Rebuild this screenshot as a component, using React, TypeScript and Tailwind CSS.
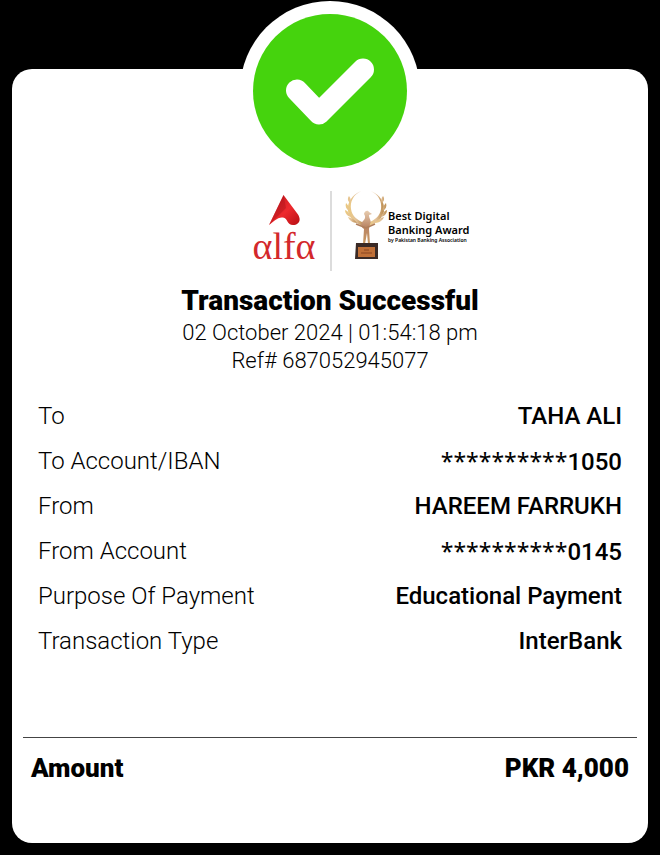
const details = [
  { label: "To", mask: "", value: "TAHA ALI" },
  { label: "To Account/IBAN", mask: "**********", value: "1050" },
  { label: "From", mask: "", value: "HAREEM FARRUKH" },
  { label: "From Account", mask: "**********", value: "0145" },
  { label: "Purpose Of Payment", mask: "", value: "Educational Payment" },
  { label: "Transaction Type", mask: "", value: "InterBank" },
];

function SuccessBadge() {
  return (
    <svg viewBox="0 0 180 180" className="size-[180px]" role="img" aria-label="Success">
      <circle cx="90" cy="90" r="90" fill="#fff" />
      <circle cx="90" cy="90" r="77" fill="#45d30d" />
      <path
        d="M57 89.500L79 112.500L123 68.500"
        fill="none"
        stroke="#fff"
        strokeWidth="22"
        strokeLinecap="round"
        strokeLinejoin="round"
      />
    </svg>
  );
}

function AlfaLogo() {
  return (
    <div className="flex w-16 flex-col items-center">
      <svg viewBox="0 0 32 32" className="size-8" aria-hidden="true">
        <defs>
          <linearGradient id="alfaRed" x1="0" y1="0" x2="1" y2="1">
            <stop offset="0" stopColor="#b9151b" />
            <stop offset="0.55" stopColor="#ee2a2e" />
            <stop offset="1" stopColor="#b80f14" />
          </linearGradient>
        </defs>
        <path
          d="M15.500 1L30 20.500C34 27 30 31 25 31C19 31 20 24.500 15 23.500C10 22.500 5 28 1 31Z"
          fill="url(#alfaRed)"
        />
        <path d="M15.500 1L18 14L1 31Z" fill="#a81218" opacity="0.4" />
      </svg>
      <span className="font-['Liberation_Serif',serif] text-[38px] leading-10 text-[#d3282c]">αlfα</span>
    </div>
  );
}

function Trophy() {
  return (
    <svg viewBox="0 0 44 70" className="h-[70px] w-11 shrink-0" aria-hidden="true">
      <defs>
        <linearGradient id="wing" x1="0" y1="0" x2="1" y2="0">
          <stop offset="0" stopColor="#ecca7c" />
          <stop offset="0.5" stopColor="#e3c29a" />
          <stop offset="1" stopColor="#b98a4c" />
        </linearGradient>
        <linearGradient id="stem" x1="0" y1="0" x2="0" y2="1">
          <stop offset="0" stopColor="#e8cdb0" />
          <stop offset="0.5" stopColor="#b98464" />
          <stop offset="1" stopColor="#c99a62" />
        </linearGradient>
      </defs>
      <g fill="url(#wing)">
        <path d="M17 0C9 4 6 11 7 18C8 25 13 29 20 32L19 35C11 32 5 27 4 20C3 11 8 4 17 0Z" />
        <path d="M27 0C35 4 38 11 37 18C36 25 31 29 24 32L25 35C33 32 39 27 40 20C41 11 36 4 27 0Z" />
        <path d="M6 12C4 10 3 8 5 5C7 7 7 10 6 12ZM5 20C2 18 1 15 2 12C4 14 6 17 5 20ZM7 26C3 25 1 22 1 19C4 20 6 23 7 26ZM13 32C9 32 5 29 4 26C8 27 11 29 13 32Z" />
        <path d="M38 12C40 10 41 8 39 5C37 7 37 10 38 12ZM39 20C42 18 43 15 42 12C40 14 38 17 39 20ZM37 26C41 25 43 22 43 19C40 20 38 23 37 26ZM31 32C35 32 39 29 40 26C36 27 33 29 31 32Z" />
      </g>
      <path
        d="M20 23C21 19 24 19 25 21L28 23L25 24C25 28 28 30 26 33L25 38L26 53H24L23 42L21 53H19L20 38C16 35 17 32 19 30C21 28 22 26 20 23Z"
        fill="url(#stem)"
      />
      <path d="M12 33L22 37L31 33" fill="none" stroke="#b07f5c" strokeWidth="1.500" />
      <path d="M12 52H34L34 68H11Z" fill="#3a2a26" />
      <path d="M14 56H31V66H14Z" fill="#c07038" />
      <path d="M20 59H25M17 62H28" stroke="#8a4520" strokeWidth="1" />
    </svg>
  );
}

export default function App() {
  return (
    <main className="flex min-h-screen flex-col bg-black px-3 pt-px pb-3 font-[Roboto,sans-serif] text-black">
      <div className="relative z-10 -mb-28 flex justify-center">
        <SuccessBadge />
      </div>

      <section className="flex flex-1 flex-col rounded-[20px] bg-white pt-[122px] pb-14">
        <div className="flex justify-center">
          <div className="grid w-[434px] grid-cols-2">
            <div className="flex h-20 items-start justify-end pt-[3px] pr-3.5">
              <AlfaLogo />
            </div>
            <div className="flex items-start border-l-2 border-[#dcdcdc] pl-3">
              <Trophy />
              <div className="pt-[18px] font-['Noto_Sans',sans-serif] whitespace-nowrap">
                <p className="text-[11px] leading-[14px] font-semibold">Best Digital</p>
                <p className="text-[11px] leading-[14px] font-semibold">Banking Award</p>
                <p className="text-[5px] leading-[7px] font-semibold">by Pakistan Banking Association</p>
              </div>
            </div>
          </div>
        </div>

        <header className="pt-3 text-center">
          <h1 className="text-[28px] leading-9 font-black">Transaction Successful</h1>
          <p className="text-[22px] leading-7 font-light">02 October 2024 | 01:54:18 pm</p>
          <p className="text-[22px] leading-7 font-light">Ref# 687052945077</p>
        </header>

        <dl className="px-[26px] pt-[19px] text-[24px] leading-[45px]">
          {details.map(({ label, mask, value }) => (
            <div key={label} className="flex h-[45px] justify-between">
              <dt className="font-light">{label}</dt>
              <dd className="font-medium">
                {mask && <span className="font-['Noto_Sans',sans-serif] text-[23px] font-normal">{mask}</span>}
                {value}
              </dd>
            </div>
          ))}
        </dl>

        <div className="mx-[11px] mt-auto flex justify-between border-t border-[#444] px-2 pt-3 text-[26px] leading-[37px] font-black">
          <span>Amount</span>
          <span>PKR 4,000</span>
        </div>
      </section>
    </main>
  );
}
